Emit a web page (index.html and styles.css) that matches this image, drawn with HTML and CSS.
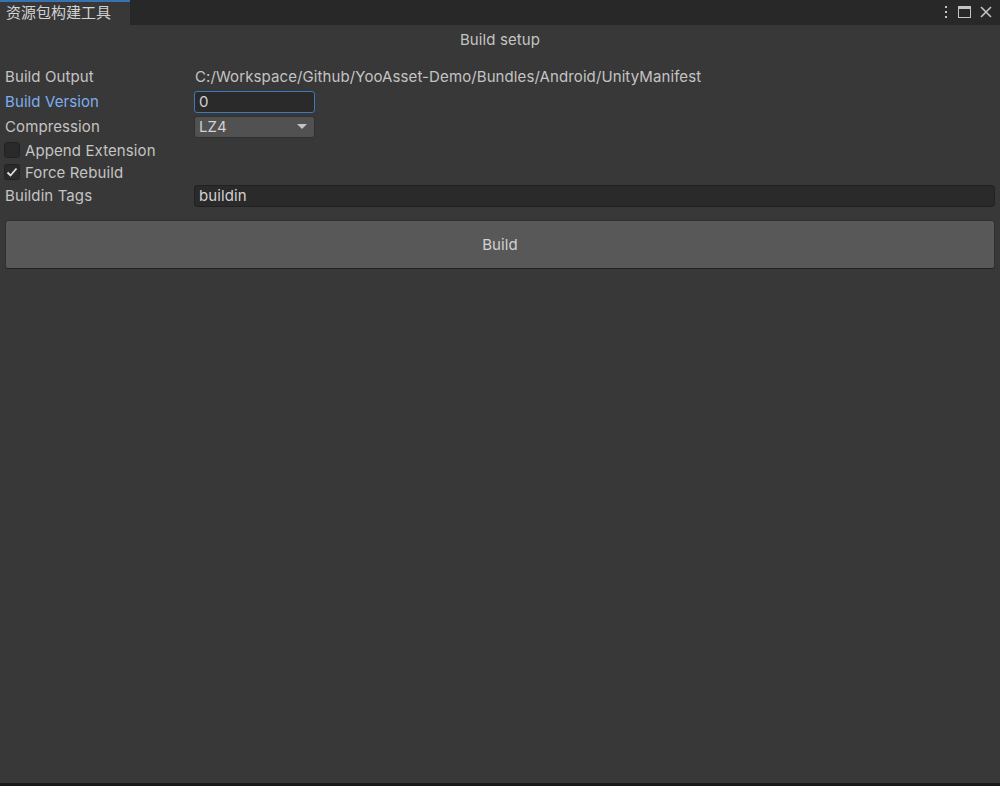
FILE: index.html
```html
<!DOCTYPE html>
<html lang="en">
<head>
<meta charset="UTF-8">
<meta name="viewport" content="width=device-width, initial-scale=1.0">
<title>资源包构建工具</title>
<link rel="stylesheet" href="styles.css">
</head>
<body>
<div class="window">
  <div class="tabbar">
    <div class="tab">资源包构建工具</div>
    <div class="tab-icons">
      <svg width="6" height="14" viewBox="0 0 6 14"><rect x="2" y="1" width="2" height="2" fill="#c4c4c4"/><rect x="2" y="6" width="2" height="2" fill="#c4c4c4"/><rect x="2" y="11" width="2" height="2" fill="#c4c4c4"/></svg>
      <svg width="13" height="12" viewBox="0 0 13 12"><rect x="0.5" y="0.5" width="12" height="11" fill="none" stroke="#c4c4c4"/><rect x="1" y="1" width="11" height="2" fill="#c4c4c4"/></svg>
      <svg width="12" height="12" viewBox="0 0 12 12"><path d="M1 1 L11 11 M11 1 L1 11" stroke="#c4c4c4" stroke-width="1.6"/></svg>
    </div>
  </div>
  <div class="content">
    <div class="title">Build setup</div>
    <div class="form">
      <div class="row">
        <div class="label">Build Output</div>
        <div class="value">C:/Workspace/Github/YooAsset-Demo/Bundles/Android/UnityManifest</div>
      </div>
      <div class="row">
        <div class="label focused">Build Version</div>
        <div class="input active">0</div>
      </div>
      <div class="row">
        <div class="label">Compression</div>
        <div class="dropdown">LZ4<span class="arrow"></span></div>
      </div>
      <div class="row check-row">
        <div class="checkbox"></div>
        <div class="check-label">Append Extension</div>
      </div>
      <div class="row check-row">
        <div class="checkbox checked">
          <svg width="12" height="10" viewBox="0 0 12 10"><path d="M1.5 5.5 L4.5 8.5 L10.5 1.5" fill="none" stroke="#e0e0e0" stroke-width="1.8"/></svg>
        </div>
        <div class="check-label">Force Rebuild</div>
      </div>
      <div class="row">
        <div class="label">Buildin Tags</div>
        <div class="input wide">buildin</div>
      </div>
    </div>
    <button class="build">Build</button>
  </div>
  <div class="footer"></div>
</div>
</body>
</html>
```

FILE: styles.css
```css
html, body {
  margin: 0;
  padding: 0;
  background: #383838;
}

body {
  font-family: Inter, "Noto Sans CJK SC", sans-serif;
  font-size: 15px;
  letter-spacing: 0.1px;
  color: #c4c4c4;
}

.window {
  width: 1000px;
  height: 786px;
  display: flex;
  flex-direction: column;
}

.tabbar {
  height: 25px;
  background: #282828;
  display: flex;
  justify-content: space-between;
  align-items: stretch;
}

.tab {
  width: 130px;
  padding-left: 6px;
  background: #383838;
  border-top: 2px solid #3a72b0;
  box-sizing: border-box;
  font-size: 15px;
  letter-spacing: 0;
  line-height: 22px;
  color: #d2d2d2;
}

.tab-icons {
  display: flex;
  align-items: center;
  gap: 9px;
  padding-right: 8px;
  padding-bottom: 1px;
}

.content {
  flex: 1;
  padding: 0 5px;
}

.title {
  text-align: center;
  line-height: 18px;
  padding-top: 6px;
  margin-bottom: 15px;
}

.form {
  display: flex;
  flex-direction: column;
}

.row {
  display: flex;
  align-items: center;
  height: 25px;
}

.check-row {
  height: 22px;
}

.label {
  width: 189px;
  flex-shrink: 0;
}

.label.focused {
  color: #7eaef0;
}

.value {
  padding-left: 1px;
}

.input {
  width: 121px;
  height: 22px;
  box-sizing: border-box;
  background: #2a2a2a;
  border: 1px solid #212121;
  border-radius: 3px;
  padding-left: 4px;
  line-height: 20px;
  color: #d2d2d2;
}

.input.active {
  border-color: #3a79bb;
}

.input.wide {
  flex: 1;
}

.dropdown {
  width: 121px;
  height: 22px;
  box-sizing: border-box;
  background: #515151;
  border: 1px solid #303030;
  border-radius: 3px;
  padding-left: 4px;
  line-height: 20px;
  color: #d2d2d2;
  display: flex;
  justify-content: space-between;
  align-items: center;
}

.arrow {
  width: 0;
  height: 0;
  border-left: 5px solid transparent;
  border-right: 5px solid transparent;
  border-top: 5px solid #c4c4c4;
  margin-right: 7px;
}

.checkbox {
  width: 16px;
  height: 16px;
  box-sizing: border-box;
  background: #2a2a2a;
  border: 1px solid #212121;
  border-radius: 3px;
  margin-left: -1px;
  margin-right: 5px;
  display: flex;
  align-items: center;
  justify-content: center;
}

.build {
  display: block;
  width: 100%;
  height: 49px;
  margin-top: 12px;
  background: #585858;
  border: 1px solid #303030;
  border-bottom-color: #232323;
  border-radius: 3px;
  font-family: Inter, sans-serif;
  font-size: 15px;
  letter-spacing: 0.1px;
  color: #d2d2d2;
}

.footer {
  height: 3px;
  background: #191919;
}
```
